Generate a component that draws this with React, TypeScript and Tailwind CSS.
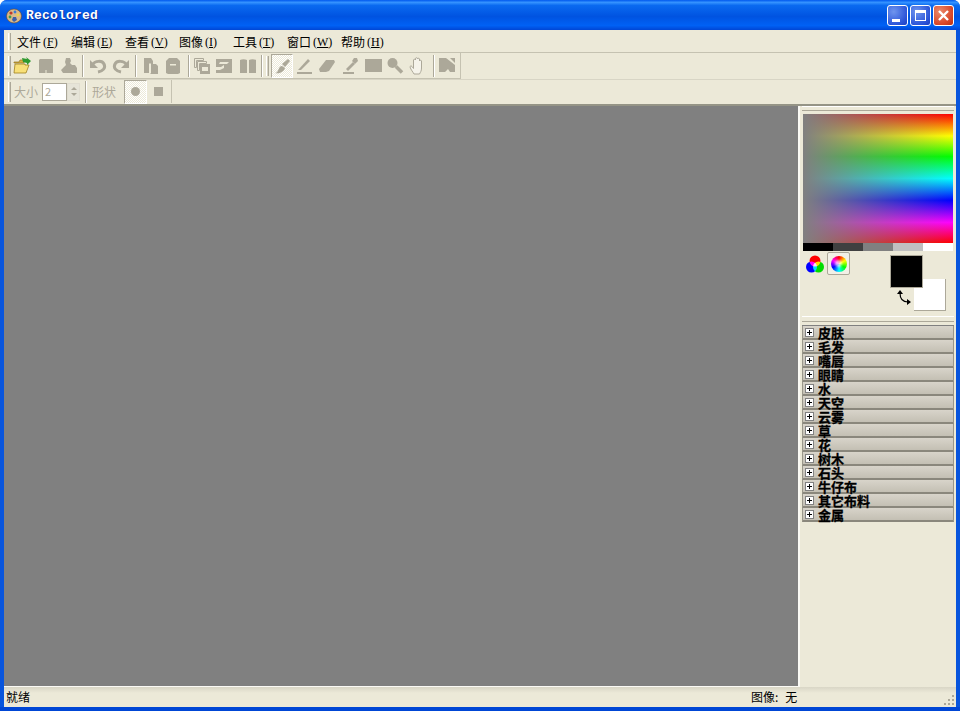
const menus = [
  ['文件', 'F'],
  ['编辑', 'E'],
  ['查看', 'V'],
  ['图像', 'I'],
  ['工具', 'T'],
  ['窗口', 'W'],
  ['帮助', 'H'],
];

const groups = ['皮肤', '毛发', '嘴唇', '眼睛', '水', '天空', '云雾', '草', '花', '树木', '石头', '牛仔布', '其它布料', '金属'];

const GRAY = '#aca899';

// every toolbar glyph is drawn on a 20x20 box
const Glyph = ({ children }: { children: React.ReactNode }) => (
  <svg width="20" height="20" viewBox="0 0 20 20" fill={GRAY} className="shrink-0">
    {children}
  </svg>
);

const Grip = () => <div className="h-[20px] w-[3px] shrink-0 border-x border-l-white border-r-[#aca899] bg-[#d8d4c4]" />;
const Sep = () => <div className="mx-[3px] h-[22px] w-[2px] shrink-0 border-r border-l border-r-white border-l-[#aca899]" />;

const Tool = ({ w = 23, pressed, children }: { w?: number; pressed?: boolean; children: React.ReactNode }) => (
  <div
    className={
      pressed
        ? 'flex h-[24px] shrink-0 items-center justify-center border border-t-[#aca899] border-r-white border-b-white border-l-[#aca899] bg-[repeating-conic-gradient(#ffffff_0_25%,#ece9d8_0_50%)] bg-[length:2px_2px]'
        : 'flex h-[24px] shrink-0 items-center justify-center'
    }
    style={{ width: w }}
  >
    {children}
  </div>
);

const Folder = () => (
  <svg width="20" height="20" viewBox="0 0 20 20" className="shrink-0">
    <path d="M2 6h5l1-2h4v3H2z" fill="#d8b040" stroke="#9a7a20" strokeWidth="0.7" />
    <path d="M2 17 3 8h10v1h4l-3 8z" fill="#f8e078" stroke="#a08020" strokeWidth="0.8" />
    <path d="M10 2l5 1-1-2 5 4-4 4V7l-4-1z" fill="#2f9a2f" />
  </svg>
);

const Save = () => (
  <Glyph>
    <path d="M4 3h12l1 1v13H3V4z" />
    <path d="M9.500 14h1v3h-1z" fill="#ece9d8" />
  </Glyph>
);

const Stamp = () => (
  <Glyph>
    <path d="M7 2h4l1 3-1 2 2 2h3l2 3v5H4l-2-3 3-3 2-2-1-3z" />
  </Glyph>
);

const Undo = ({ flip }: { flip?: boolean }) => (
  <svg width="20" height="20" viewBox="0 0 20 20" fill="none" className={flip ? 'shrink-0 -scale-x-100' : 'shrink-0'}>
    <path d="M5 8c2-3 9-4 11 0s-1 7-6 8" stroke={GRAY} strokeWidth="3" />
    <path d="M2 4v8h8z" fill={GRAY} />
  </svg>
);

const Copy = () => (
  <Glyph>
    <path d="M4 2h7l2 3v3h-3v9H4z" />
    <path d="M10 8h6l2 2v8h-8z" />
    <path d="M9 7.500h2v10H9z" fill="#ece9d8" />
  </Glyph>
);

const Paste = () => (
  <Glyph>
    <path d="M6 2h8l3 3v12l-2 1H5l-2-1V5z" />
    <path d="M7 8h6v1.500H7z" fill="#ece9d8" />
  </Glyph>
);

const Layers = () => (
  <svg width="20" height="20" viewBox="0 0 20 20" fill="none" className="shrink-0">
    <path d="M2.500 2.500h9v2h-7v7h-2z" stroke={GRAY} />
    <path d="M5.500 5.500h9v2h-7v7h-2z" stroke={GRAY} />
    <path d="M8 8h10v10H8z" fill={GRAY} />
    <path d="M10 11h6v4h-6z" fill="#ece9d8" />
  </svg>
);

const Flatten = () => (
  <Glyph>
    <path d="M2 3h16v14H2z" />
    <path d="M6 6h9l-2 2H5zM2 11h5l3-2v3l-4 2H2z" fill="#ece9d8" />
  </Glyph>
);

const Book = () => (
  <Glyph>
    <path d="M2 4c2-1 5-1 7 0v13H2zM11 4c2-1 5-1 7 0v13h-7z" />
    <path d="M9 4h2v13H9z" fill="#ece9d8" />
  </Glyph>
);

const Brush = () => (
  <Glyph>
    <path d="M10 8l6-5 2 2-5 6z" />
    <path d="M3 17c4 0 3-7 7-7l3 2c-1 4-6 6-10 5z" />
  </Glyph>
);

const Line = () => (
  <svg width="20" height="20" viewBox="0 0 20 20" fill="none" className="shrink-0">
    <path d="M4 14 14 3l2 2L7 14z" fill={GRAY} />
    <path d="M3 17h15" stroke={GRAY} strokeWidth="2" />
  </svg>
);

const Eraser = () => (
  <Glyph>
    <path d="M9 4h8l1 2-6 9-3 1H3l-1-3z" />
  </Glyph>
);

const Dropper = () => (
  <svg width="20" height="20" viewBox="0 0 20 20" fill="none" className="shrink-0">
    <path d="M6 13 13 6l2 2-7 7z" fill={GRAY} />
    <path d="M14 2h3l1 3-3 3-3-3z" fill={GRAY} />
    <path d="M3 17h11" stroke={GRAY} strokeWidth="2" />
  </svg>
);

const Magnifier = () => (
  <svg width="20" height="20" viewBox="0 0 20 20" fill="none" className="shrink-0">
    <circle cx="7.500" cy="7" r="5" fill={GRAY} />
    <path d="M11 10.500l6 6" stroke={GRAY} strokeWidth="3.500" />
  </svg>
);

const Hand = () => (
  <svg width="20" height="20" viewBox="0 0 20 20" fill="#f5f3ea" stroke={GRAY} className="shrink-0">
    <path d="M6 18c-1-2-3-4-4-7 0-1 1-1.500 2-.5l1.500 2V4c0-1 2-1 2 0V2.500c0-1 2-1 2 0V3c0-1 2-1 2 0v2c0-1 2-1 2 0v7c0 3-1 4-2 6z" />
  </svg>
);

const Select = () => (
  <Glyph>
    <path d="M2 2h16v14h-5l-2-3-3 3H2z" />
    <path d="M9 2l9 7V7l-5-5z" fill="#ece9d8" />
  </Glyph>
);

const Plus = () => (
  <div className="relative mr-[4px] h-[9px] w-[9px] shrink-0 border border-[#808080] bg-white">
    <div className="absolute top-[3px] left-[1px] h-px w-[5px] bg-black" />
    <div className="absolute top-[1px] left-[3px] h-[5px] w-px bg-black" />
  </div>
);

export default function App() {
  return (
    <div
      className="flex h-[711px] w-[960px] flex-col overflow-hidden rounded-t-[7px] bg-[#0855dd] text-[12px] leading-none text-black"
      style={{ fontFamily: '"Noto Sans CJK SC", "Liberation Sans", sans-serif' }}
    >
      {/* title bar */}
      <div className="flex h-[30px] shrink-0 items-center bg-[linear-gradient(#0058ee_0%,#3593ff_8%,#0a6af0_18%,#0053e1_55%,#0061f5_85%,#0046d5_100%)] pt-[1px] pr-[6px] pl-[6px]">
        <svg width="16" height="16" viewBox="0 0 16 16">
          <ellipse cx="8" cy="8" rx="7.500" ry="7" fill="#d9b98a" stroke="#6b4a2a" strokeWidth="0.6" />
          <circle cx="5" cy="5" r="1.600" fill="#c0392b" />
          <circle cx="9" cy="4" r="1.400" fill="#3a7bd5" />
          <circle cx="12" cy="7" r="1.400" fill="#ecd24a" />
          <circle cx="4" cy="9" r="1.400" fill="#3f9b4a" />
          <path d="M7 9l3 0 1 3-3 2-2-2z" fill="#3c5fa8" />
        </svg>
        <span
          className="ml-[4px] text-[13px] font-bold tracking-[0.2px] text-white [text-shadow:1px_1px_#0f2f9a]"
          style={{ fontFamily: '"Liberation Mono", monospace' }}
        >
          Recolored
        </span>
        <div className="ml-auto flex gap-[2px]">
          <div className="relative h-[21px] w-[21px] rounded-[3px] border border-white bg-[radial-gradient(circle_at_30%_30%,#6f95ee,#2c55d8_70%,#1c3fc0)]">
            <div className="absolute bottom-[3px] left-[4px] h-[3px] w-[8px] bg-white" />
          </div>
          <div className="relative h-[21px] w-[21px] rounded-[3px] border border-white bg-[radial-gradient(circle_at_30%_30%,#6f95ee,#2c55d8_70%,#1c3fc0)]">
            <div className="absolute top-[4px] left-[4px] h-[11px] w-[11px] border border-t-[3px] border-white" />
          </div>
          <div className="relative h-[21px] w-[21px] rounded-[3px] border border-white bg-[radial-gradient(circle_at_30%_30%,#eb8a6c,#d9482a_65%,#b9300f)]">
            <svg width="19" height="19" viewBox="0 0 19 19" className="absolute top-0 left-0">
              <path d="M5 5l9 9M14 5l-9 9" stroke="#fff" strokeWidth="2.400" />
            </svg>
          </div>
        </div>
      </div>

      <div className="mx-[4px] flex min-h-0 flex-1 flex-col bg-[#ece9d8]">
        {/* menu bar */}
        <div className="flex h-[23px] shrink-0 items-center border-b border-[#c5c2b1] pt-[1px]">
          <div className="mr-[6px] ml-[4px] h-[17px] w-[3px] border-x border-r-[#aca899] border-l-white" />
          {menus.map(([label, key]) => (
            <div key={label} className="flex w-[54px] shrink-0 items-center">
              <span>{label}</span>
              <span className="ml-[2px]" style={{ fontFamily: '"Liberation Serif", serif' }}>
                (<span className="underline">{key}</span>)
              </span>
            </div>
          ))}
        </div>

        {/* main toolbar */}
        <div className="flex h-[27px] shrink-0 items-center border-b border-[#d8d5c5]">
          <div className="flex h-[26px] w-[457px] items-center overflow-hidden border-r border-b border-[#c5c2b1] pl-[4px]">
            <Grip />
            <Tool w={22}><Folder /></Tool>
            <Tool w={25}><Save /></Tool>
            <Tool w={21}><Stamp /></Tool>
            <Sep />
            <Tool w={22}><Undo /></Tool>
            <Tool w={23}><Undo flip /></Tool>
            <Sep />
            <Tool w={20}><Copy /></Tool>
            <Tool w={25}><Paste /></Tool>
            <Sep />
            <Tool w={17}><Layers /></Tool>
            <Tool w={28}><Flatten /></Tool>
            <Tool w={20}><Book /></Tool>
            <Sep />
            <Grip />
            <div className="w-[2px] shrink-0" />
            <Tool w={22} pressed><Brush /></Tool>
            <Tool w={22}><Line /></Tool>
            <Tool w={24}><Eraser /></Tool>
            <Tool w={22}><Dropper /></Tool>
            <Tool w={24}><div className="h-[13px] w-[17px] bg-[#aca899]" /></Tool>
            <Tool w={20}><Magnifier /></Tool>
            <Tool w={25}><Hand /></Tool>
            <Sep />
            <Tool w={18}><Select /></Tool>
          </div>
        </div>

        {/* tool options */}
        <div className="flex h-[26px] shrink-0 items-start border-b-2 border-[#716f64]/70">
          <div className="flex h-[23px] w-[168px] items-center border-r border-[#c5c2b1] pl-[4px] text-[#aca899]">
            <Grip />
            <span className="ml-[3px] w-[28px]">大小</span>
            <div className="flex h-[18px] w-[25px] items-center border border-[#aca899] bg-white pl-[2px] text-[11px]">2</div>
            <div className="flex h-[18px] w-[13px] flex-col items-center justify-center gap-[3px] border border-[#e0ddd0] bg-[#e6e4d8]">
              <div className="h-0 w-0 border-x-[3px] border-b-[3px] border-x-transparent border-b-[#aca899]" />
              <div className="h-0 w-0 border-x-[3px] border-t-[3px] border-x-transparent border-t-[#aca899]" />
            </div>
            <div className="ml-[2px]"><Sep /></div>
            <span className="ml-[2px] w-[32px]">形状</span>
            <Tool w={23} pressed><div className="h-[9px] w-[9px] rounded-full bg-[#aca899]" /></Tool>
            <Tool w={22}><div className="h-[9px] w-[9px] bg-[#aca899]" /></Tool>
          </div>
        </div>

        <div className="flex min-h-0 flex-1">
          {/* canvas */}
          <div className="w-[796px] shrink-0 border-r-2 border-b border-r-[#fbfaf5] border-b-[#fbfaf5] bg-[#808080]" />

          {/* side panel */}
          <div className="flex min-w-0 flex-1 flex-col">
            <div className="mx-[2px] h-[5px] border-y border-t-white border-b-[#aca899]" />
            <div className="mt-[3px] ml-[3px] h-[129px] w-[150px] bg-[linear-gradient(90deg,#808080,rgba(128,128,128,0)),linear-gradient(#ff0000,#ffff00_17%,#00ff00_33%,#00ffff_50%,#0000ff_67%,#ff00ff_84%,#ff0000)]" />
            <div className="ml-[3px] flex h-[8px] w-[150px]">
              <div className="w-[30px] bg-black" />
              <div className="w-[30px] bg-[#404040]" />
              <div className="w-[30px] bg-[#808080]" />
              <div className="w-[30px] bg-[#c0c0c0]" />
              <div className="w-[30px] bg-white" />
            </div>

            <div className="relative h-[65px] shrink-0">
              <div className="flex items-center pt-[1px] pl-[3px]">
                <div className="flex h-[23px] w-[24px] items-center justify-center">
                  <svg width="18" height="18" viewBox="0 0 18 18" className="isolate">
                    <circle cx="9" cy="6" r="5.500" fill="#f00" className="mix-blend-screen" />
                    <circle cx="5.500" cy="12" r="5.500" fill="#00f" className="mix-blend-screen" />
                    <circle cx="12.500" cy="12" r="5.500" fill="#0d0" className="mix-blend-screen" />
                  </svg>
                </div>
                <div className="flex h-[23px] w-[23px] items-center justify-center rounded-[2px] border border-[#aca899] bg-[#f2f0e6]">
                  <div className="flex h-[16px] w-[16px] items-center justify-center rounded-full bg-[conic-gradient(#ff0000,#ffff00,#00ff00,#00ffff,#0000ff,#ff00ff,#ff0000)]">
                    <div className="h-[7px] w-[7px] rounded-full bg-white/70 blur-[1px]" />
                  </div>
                </div>
              </div>
              <div className="absolute top-[28px] left-[114px] h-[32px] w-[32px] border-r border-b border-[#aca899] bg-white" />
              <div className="absolute top-[4px] left-[90px] h-[33px] w-[33px] border border-[#aca899] bg-black" />
              <svg width="16" height="16" viewBox="0 0 16 16" className="absolute top-[39px] left-[96px]" fill="none">
                <path d="M4 3c0 6 2 9 8 9" stroke="#000" strokeWidth="1.200" />
                <path d="M4 0l3 4H1zM15 12l-4 3V9z" fill="#000" />
              </svg>
            </div>

            <div className="mx-[2px] h-[6px] border-y border-t-white border-b-[#aca899]" />

            <div className="mx-[2px] mt-[3px] border-t border-[#808080]">
              {groups.map((name) => (
                <div
                  key={name}
                  className="flex h-[14px] items-center border-x border-b border-x-[#9a978a] border-b-[#8a877c] bg-[linear-gradient(#d8d4ca,#c4c0b4_90%,#8a877c_90%)] pl-[2px]"
                >
                  <Plus />
                  <span className="block h-[13px] text-[13px] font-bold [-webkit-text-stroke:0.3px_black]">{name}</span>
                </div>
              ))}
            </div>
          </div>
        </div>

        {/* status bar */}
        <div className="relative flex h-[20px] shrink-0 items-center bg-[linear-gradient(#d9d6c6,#ece9d8_30%,#ece9d8)] pl-[2px]">
          <span>就绪</span>
          <span className="ml-[721px]">图像:</span>
          <span className="ml-[7px]">无</span>
          <svg width="12" height="12" viewBox="0 0 12 12" className="absolute right-[1px] bottom-[1px]" fill="#aca899">
            <rect x="9" y="1" width="2" height="2" />
            <rect x="5" y="5" width="2" height="2" />
            <rect x="9" y="5" width="2" height="2" />
            <rect x="1" y="9" width="2" height="2" />
            <rect x="5" y="9" width="2" height="2" />
            <rect x="9" y="9" width="2" height="2" />
          </svg>
        </div>
      </div>
      <div className="h-[4px] shrink-0 bg-[#0046d5]" />
    </div>
  );
}
